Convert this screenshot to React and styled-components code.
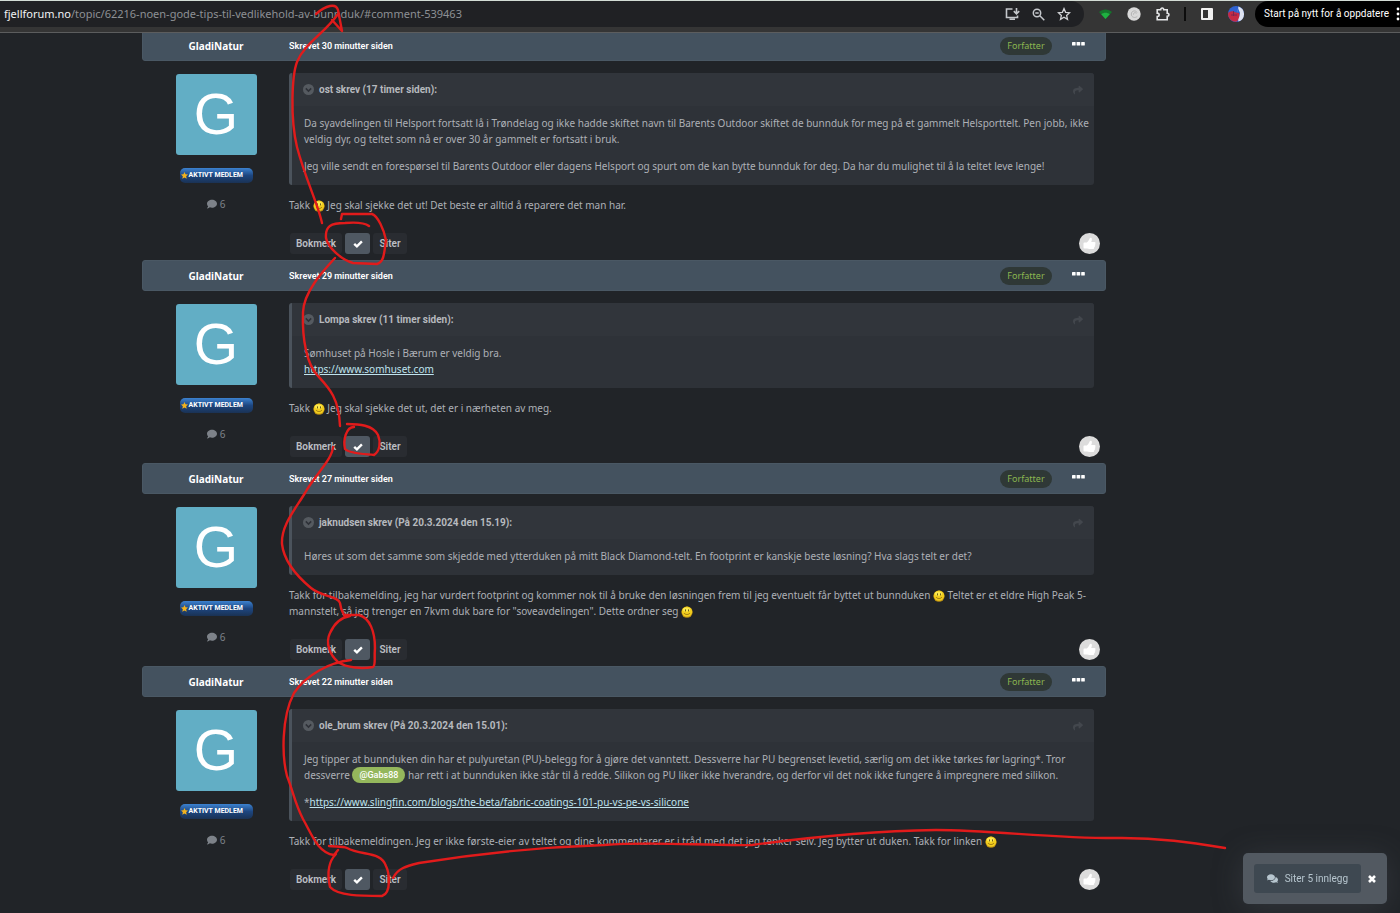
import React, { useState } from "react";
import styled, { createGlobalStyle, css } from "styled-components";
import { FaComment, FaComments, FaShare } from "react-icons/fa";

const textFont = `"Noto Sans", "Open Sans", sans-serif`;
const labelFont = `Roboto, "Noto Sans", sans-serif`;

const GlobalStyle = createGlobalStyle`
  *, *::before, *::after { box-sizing: border-box; }
  body {
    margin: 0;
    background: #212428;
    color: #adb0b6;
    font-family: ${textFont};
    font-size: 10px;
    line-height: 16px;
    overflow: hidden;
  }
  button { font: inherit; color: inherit; border: 0; padding: 0; background: none; cursor: pointer; }
  svg { display: block; }
`;

const Page = styled.div`
  position: relative;
  min-height: 100vh;
`;

/* Browser bar */

const BrowserBar = styled.header`
  position: relative;
  z-index: 1;
  display: flex;
  align-items: flex-start;
  height: 33px;
  margin-bottom: -3px;
  background: #353535;
  border-top: 1px solid #d3dcd5;
  border-bottom: 1px solid #5c5d5e;
`;

const AddressBar = styled.div`
  flex: 1;
  display: flex;
  align-items: center;
  height: 26px;
  padding: 0 12px 0 4px;
  background: #202124;
  border-radius: 0 13px 13px 0;
`;

const Address = styled.div`
  flex: 1;
  font-size: 11px;
  white-space: nowrap;
  color: #8d9094;
`;

const Host = styled.span`
  color: #f1f3f4;
`;

const IconRow = styled.div`
  display: flex;
  align-items: center;
  gap: ${(p) => p.$gap}px;
`;

const IconButton = styled.button`
  display: flex;
  align-items: center;
  justify-content: center;
  width: 16px;
  height: 16px;
`;

const Extensions = styled(IconRow)`
  height: 26px;
  padding: 0 11px 0 13px;
`;

const Divider = styled.span`
  width: 2px;
  height: 14px;
  background: #0c0c0c;
`;

const UpdateButton = styled.button`
  display: flex;
  align-items: center;
  justify-content: space-between;
  width: 145px;
  height: 26px;
  padding-left: 9px;
  background: #000;
  color: #fff;
  border-radius: 13px 0 0 13px;
  font-family: ${labelFont};
  white-space: nowrap;
`;

/* Thread */

const Thread = styled.main`
  margin: 0 294px 0 142px;
`;

const PostHeader = styled.header`
  display: flex;
  align-items: center;
  height: 31px;
  background: #44525f;
  border: 1px solid #4a5864;
  border-radius: 3px;
  color: #fff;
`;

const Author = styled.h3`
  width: 146px;
  margin: 0;
  font-size: 10px;
  font-weight: 700;
  line-height: 16px;
  text-align: center;
`;

const Posted = styled.time`
  flex: 1;
  font-family: ${labelFont};
  font-size: 9px;
  font-weight: 600;
`;

const RoleBadge = styled.span`
  width: 52px;
  height: 18px;
  border-radius: 9px;
  background: #2f3836;
  color: #8cb650;
  font-size: 9px;
  line-height: 18px;
  text-align: center;
`;

const MenuButton = styled.button`
  display: flex;
  width: 13px;
  height: 8px;
  margin: 0 20px;
`;

const PostBody = styled.div`
  display: grid;
  grid-template-columns: 147px minmax(0, 1fr);
  padding: 12px 12px 6px 0;
`;

const Profile = styled.aside`
  display: flex;
  flex-direction: column;
  align-items: center;
  gap: 13px;
  padding: 1px 0 0 1px;
`;

const Avatar = styled.div`
  width: 81px;
  height: 81px;
  border-radius: 3px;
  background: #62aec5;
  color: #fff;
  font-family: "Liberation Sans", Arial, sans-serif;
  font-size: 57px;
  line-height: 81px;
  text-align: center;
`;

const MemberBadge = styled.div`
  display: flex;
  align-items: center;
  gap: 1px;
  width: 73px;
  height: 15px;
  padding-left: 1px;
  border-radius: 5px;
  background: linear-gradient(#3c82d0, #1d4680 50%, #1a3254);
  color: #fff;
  font-family: ${labelFont};
  font-size: 7px;
  font-weight: 700;
  line-height: 15px;
  white-space: nowrap;
`;

const PostCount = styled.div`
  display: flex;
  align-items: center;
  gap: 3px;
  color: #7d8289;
`;

const Quote = styled.blockquote`
  margin: 0 0 12px;
  border-left: 3px solid #4b535c;
  border-radius: 3px;
  background: #2e3238;
`;

const QuoteHeader = styled.div`
  display: flex;
  align-items: center;
  gap: 5px;
  height: 33px;
  padding: 0 11px;
  border-radius: 0 3px 0 0;
  background: #31353b;
  color: #b6b9be;
`;

const Cite = styled.cite`
  flex: 1;
  font-family: ${labelFont};
  font-style: normal;
  font-weight: 700;
`;

const QuoteBody = styled.div`
  display: grid;
  gap: 11px;
  padding: 9px 2px 11px 12px;
`;

const Paragraph = styled.p`
  margin: 0;
`;

const TextLink = styled.a`
  color: #bfe3ee;
  text-decoration: underline;
`;

const Mention = styled.a`
  display: inline-block;
  height: 16px;
  padding: 0 7px;
  border-radius: 8px;
  background: #94b75c;
  color: #fff;
  font-family: ${labelFont};
  font-size: 9px;
  font-weight: 500;
  text-decoration: none;
  vertical-align: top;
`;

const SmileyBox = styled.span`
  display: inline-block;
  width: 12px;
  height: 12px;
  margin-top: 3px;
  vertical-align: top;
`;

const Actions = styled.footer`
  display: flex;
  align-items: center;
  gap: 3px;
  height: 21px;
  margin-top: 20px;
  padding-left: 1px;
`;

const ActionButton = styled.button`
  display: flex;
  align-items: center;
  justify-content: center;
  width: ${(p) => p.$width}px;
  height: 21px;
  border-radius: 3px;
  background: #292c31;
  color: #bcbfc4;
  font-family: ${labelFont};
  font-weight: 600;
  ${(p) =>
    p.$active &&
    css`
      background: #4f5862;
      color: #fff;
    `}
`;

const LikeButton = styled.button`
  display: flex;
  align-items: center;
  justify-content: center;
  width: 21px;
  height: 21px;
  margin: 0 -6px 0 auto;
  border-radius: 50%;
  background: #dcdcdc;
`;

/* Multi-quote popup */

const QuotePopup = styled.div`
  position: fixed;
  right: 13px;
  bottom: 9px;
  display: flex;
  align-items: center;
  gap: 7px;
  height: 51px;
  padding: 0 8px 0 11px;
  border-radius: 5px;
  background: #525961;
  box-shadow: 0 4px 30px rgba(82, 89, 97, 0.35);
`;

const QuoteAllButton = styled.button`
  display: flex;
  align-items: center;
  gap: 7px;
  height: 29px;
  padding: 0 13px;
  border-radius: 3px;
  background: #3e4851;
  color: #b7c6cf;
  font-family: ${labelFont};
`;

const CloseButton = styled.button`
  width: 11px;
  height: 16px;
  color: #fff;
`;

const Markup = styled.svg`
  position: absolute;
  top: 0;
  left: 0;
  z-index: 2;
  width: 1400px;
  height: 913px;
  pointer-events: none;
`;

const Smiley = () => (
  <SmileyBox role="img" aria-label=":)">
    <svg width="12" height="12" viewBox="0 0 12 12">
      <circle cx="6" cy="6.2" r="5.6" fill="#b98c12" />
      <circle cx="6" cy="5.6" r="5.2" fill="#f0cc1e" />
      <ellipse cx="5.5" cy="3.6" rx="3.6" ry="2.2" fill="#fbe94f" />
      <path d="M4.5 3.4v2M7.5 3.400v2" stroke="#4a3708" strokeWidth="0.800" />
      <path d="M3 7c1.200 2 4.800 2 6 0" stroke="#8a660c" strokeWidth="0.800" fill="none" />
    </svg>
  </SmileyBox>
);

const ChevronDisc = () => (
  <svg width="11" height="11" viewBox="0 0 11 11">
    <circle cx="5.500" cy="5.500" r="5.500" fill="#555a60" />
    <path d="M2.800 4.400l2.700 2.700 2.700-2.700" stroke="#2e3138" strokeWidth="1.500" fill="none" />
  </svg>
);

const Check = () => (
  <svg width="10" height="8" viewBox="0 0 10 8" fill="none" stroke="currentColor" strokeWidth="2.400">
    <path d="M1.200 3.800l2.700 2.500L8.900 1.300" />
  </svg>
);

const Thumb = () => (
  <svg width="13" height="13" viewBox="0 0 13 13" fill="#fff">
    <path d="M.5 6.200c0-.4.3-.7.700-.7h2.600C5 4.600 6 3.200 6.500 1.800 6.800.4 8.800.5 8.900 2.200c0 1-.3 1.800-.7 2.700h3.100c1.400 0 1.700 1.500.8 2.100.5.600.3 1.500-.3 1.800.3.700 0 1.400-.6 1.600.1 1-.5 1.600-1.500 1.600H6.500c-1 0-1.700-.5-2.500-.6H1.200c-.4 0-.7-.3-.7-.7z" />
  </svg>
);

const Dots = () => (
  <svg width="13" height="4" viewBox="0 0 13 4" fill="#fff">
    <rect width="3.600" height="3.600" rx="0.600" />
    <rect x="4.600" width="3.600" height="3.600" rx="0.600" />
    <rect x="9.200" width="3.600" height="3.600" rx="0.600" />
  </svg>
);

const Star = () => (
  <svg width="7" height="7" viewBox="0 0 14 14">
    <path d="M7 0l2.100 4.700 4.900.5-3.700 3.400 1.100 5L7 11.100l-4.400 2.500 1.100-5L0 5.200l4.900-.5z" fill="#f2b21c" />
  </svg>
);

const posts = [
  {
    minutes: 30,
    cite: "ost skrev (17 timer siden):",
    quote: [
      "Da syavdelingen til Helsport fortsatt lå i Trøndelag og ikke hadde skiftet navn til Barents Outdoor skiftet de bunnduk for meg på et gammelt Helsporttelt. Pen jobb, ikke veldig dyr, og teltet som nå er over 30 år gammelt er fortsatt i bruk.",
      "Jeg ville sendt en forespørsel til Barents Outdoor eller dagens Helsport og spurt om de kan bytte bunnduk for deg. Da har du mulighet til å la teltet leve lenge!",
    ],
    reply: <>Takk <Smiley /> Jeg skal sjekke det ut! Det beste er alltid å reparere det man har.</>,
  },
  {
    minutes: 29,
    cite: "Lompa skrev (11 timer siden):",
    quote: [
      <>Sømhuset på Hosle i Bærum er veldig bra.<br /><TextLink href="#somhuset">https://www.somhuset.com</TextLink></>,
    ],
    reply: <>Takk <Smiley /> Jeg skal sjekke det ut, det er i nærheten av meg.</>,
  },
  {
    minutes: 27,
    cite: "jaknudsen skrev (På 20.3.2024 den 15.19):",
    quote: [
      "Høres ut som det samme som skjedde med ytterduken på mitt Black Diamond-telt. En footprint er kanskje beste løsning? Hva slags telt er det?",
    ],
    reply: <>Takk for tilbakemelding, jeg har vurdert footprint og kommer nok til å bruke den løsningen frem til jeg eventuelt får byttet ut bunnduken <Smiley /> Teltet er et eldre High Peak 5-mannstelt, så jeg trenger en 7kvm duk bare for "soveavdelingen". Dette ordner seg <Smiley /></>,
  },
  {
    minutes: 22,
    cite: "ole_brum skrev (På 20.3.2024 den 15.01):",
    quote: [
      <>Jeg tipper at bunnduken din har et pulyuretan (PU)-belegg for å gjøre det vanntett. Dessverre har PU begrenset levetid, særlig om det ikke tørkes før lagring*. Tror dessverre <Mention href="#gabs88">@Gabs88</Mention> har rett i at bunnduken ikke står til å redde. Silikon og PU liker ikke hverandre, og derfor vil det nok ikke fungere å impregnere med silikon.</>,
      <>*<TextLink href="#slingfin">https://www.slingfin.com/blogs/the-beta/fabric-coatings-101-pu-vs-pe-vs-silicone</TextLink></>,
    ],
    reply: <>Takk for tilbakemeldingen. Jeg er ikke første-eier av teltet og dine kommentarer er i tråd med det jeg tenker selv. Jeg bytter ut duken. Takk for linken <Smiley /></>,
  },
];

function Post({ minutes, cite, quote, reply }) {
  const [selected, setSelected] = useState(true);
  return (
    <article>
      <PostHeader>
        <Author>GladiNatur</Author>
        <Posted>Skrevet {minutes} minutter siden</Posted>
        <RoleBadge>Forfatter</RoleBadge>
        <MenuButton aria-label="Flere valg"><Dots /></MenuButton>
      </PostHeader>
      <PostBody>
        <Profile>
          <Avatar>G</Avatar>
          <MemberBadge><Star />AKTIVT MEDLEM</MemberBadge>
          <PostCount><FaComment size={10} />6</PostCount>
        </Profile>
        <div>
          <Quote>
            <QuoteHeader>
              <ChevronDisc />
              <Cite>{cite}</Cite>
              <FaShare size={10} color="#43474d" />
            </QuoteHeader>
            <QuoteBody>
              {quote.map((text, i) => <Paragraph key={i}>{text}</Paragraph>)}
            </QuoteBody>
          </Quote>
          <Paragraph>{reply}</Paragraph>
          <Actions>
            <ActionButton $width={52}>Bokmerk</ActionButton>
            <ActionButton $width={25} $active={selected} aria-label="Velg sitat" aria-pressed={selected} onClick={() => setSelected(!selected)}>
              <Check />
            </ActionButton>
            <ActionButton $width={34}>Siter</ActionButton>
            <LikeButton aria-label="Lik"><Thumb /></LikeButton>
          </Actions>
        </div>
      </PostBody>
    </article>
  );
}

const strokes = [
  "M322 223C318 204 305 178 297 147C290 118 292 75 297 62C304 44 325 33 338 14",
  "M316 14C326 5 336 3 338 10L342 31L332 20",
  "M341 219L342 214L372 214C378 216 384 230 386 240C384 254 384 262 377 264L353 263C342 260 328 248 326 238C325 226 331 223 345 223C357 222 365 223 369 226",
  "M335 258C322 272 304 292 303 312C302 340 307 365 318 376C329 388 339 398 340 426",
  "M354 427C346 427 343 440 345 449C350 454 366 454 374 455C380 451 381 442 378 435C373 425 359 424 347 424",
  "M333 447C332 460 315 475 305 493C294 511 281 526 282 544C284 562 299 578 311 588C322 597 338 596 340 603C341 611 343 612 344 615",
  "M344 615L359 615C370 618 375 632 375 648C374 659 376 665 373 667C362 669 347 668 338 662C330 655 325 643 330 633C335 622 343 617 350 616",
  "M351 660C330 662 306 675 294 693C281 718 282 757 287 776C293 791 295 804 303 819C312 835 318 853 334 855L338 850",
  "M336 854C326 864 328 878 330 887C338 896 361 896 382 896C392 893 389 872 386 866C381 851 362 856 347 848C342 846 335 847 329 846",
  "M393 878C398 868 407 866 419 863C475 854 542 847 604 845C654 841 704 846 752 845C826 835 878 831 936 830C992 830 1058 839 1122 838C1160 838 1188 842 1225 848",
];

export default function App() {
  return (
    <Page>
      <GlobalStyle />
      <BrowserBar>
        <AddressBar>
          <Address><Host>fjellforum.no</Host>/topic/62216-noen-gode-tips-til-vedlikehold-av-bunnduk/#comment-539463</Address>
          <IconRow $gap={10}>
            <IconButton aria-label="Installer">
              <svg width="15" height="14" viewBox="0 0 15 14" fill="none" stroke="#c4c7cb" strokeWidth="1.600">
                <path d="M7.500 2H1.500v8.500h11V8.500M4.500 12.300h5.500M11.500 1v5M8.800 4.200l2.700 2.600 2.700-2.600" />
              </svg>
            </IconButton>
            <IconButton aria-label="Zoom">
              <svg width="13" height="13" viewBox="0 0 13 13" fill="none" stroke="#c4c7cb" strokeWidth="1.500">
                <circle cx="5" cy="5" r="3.700" />
                <path d="M7.800 7.800l4.500 4.500M3.300 5h3.400" />
              </svg>
            </IconButton>
            <IconButton aria-label="Bokmerk siden">
              <svg width="14" height="14" viewBox="0 0 14 14" fill="none" stroke="#d0d2d5" strokeWidth="1.300">
                <path d="M7 1.600l1.600 3.700 4 .4-3 2.700.9 4L7 10.300l-3.500 2.100.9-4-3-2.700 4-.4z" />
              </svg>
            </IconButton>
          </IconRow>
        </AddressBar>
        <Extensions $gap={13}>
          <IconButton aria-label="Nettverk">
            <svg width="13" height="10" viewBox="0 0 13 10">
              <path d="M0 3C4-.5 9-.5 13 3L6.500 10z" fill="#15752c" />
              <path d="M2.200 5.200c2.600-2 6-2 8.600 0L6.500 10z" fill="#1fb141" />
            </svg>
          </IconButton>
          <IconButton aria-label="Utvidelse">
            <svg width="14" height="14" viewBox="0 0 14 14">
              <circle cx="7" cy="7" r="6.700" fill="#d9d9d9" />
              <path d="M10 5.500C9 3 4.500 3.400 4.300 7c-.1 3.500 4 4.500 6 2.300M9.500 6.300C8 5 6 6 6.500 7.600" fill="none" stroke="#b3b3b3" />
            </svg>
          </IconButton>
          <IconButton aria-label="Utvidelser">
            <svg width="14" height="14" viewBox="0 0 14 14" fill="none" stroke="#e4e5e7" strokeWidth="1.600">
              <path d="M1.200 2.800h3.500c0-2.400 3-2.400 3 0h3.500v3.500c2.400 0 2.400 3 0 3v3.500h-10V9.500c2.600 0 2.600-3.400 0-3.400z" />
            </svg>
          </IconButton>
          <Divider />
          <IconButton aria-label="Sidepanel">
            <svg width="12" height="12" viewBox="0 0 12 12" fill="#f1f1f1">
              <path fillRule="evenodd" d="M1 0h10a1 1 0 011 1v10a1 1 0 01-1 1H1a1 1 0 01-1-1V1a1 1 0 011-1zM2 2v8h5V2z" />
            </svg>
          </IconButton>
          <IconButton aria-label="Profil">
            <svg width="16" height="16" viewBox="0 0 16 16">
              <circle cx="8" cy="8" r="8" fill="#2f62d0" />
              <path d="M10.500 .4a8 8 0 010 15.200L9 8z" fill="#dfe3f0" />
              <path d="M10 2l2 5-1 4-2-4z" fill="#2f62d0" />
              <path d="M0 8c0-2 3-3 5-2.500l3 1 3 .5c1 2 0 6-2 8.500C4 16.500 0 12 0 8z" fill="#c62a45" />
              <path d="M5.500 5v5M3 9h6" stroke="#7d2550" />
            </svg>
          </IconButton>
        </Extensions>
        <UpdateButton>
          Start på nytt for å oppdatere
          <svg width="4" height="14" viewBox="0 0 4 14" fill="#fff">
            <circle cx="2" cy="2" r="1.400" /><circle cx="2" cy="7" r="1.400" /><circle cx="2" cy="12" r="1.400" />
          </svg>
        </UpdateButton>
      </BrowserBar>
      <Thread>
        {posts.map((post) => <Post key={post.minutes} {...post} />)}
      </Thread>
      <QuotePopup>
        <QuoteAllButton><FaComments size={11} />Siter 5 innlegg</QuoteAllButton>
        <CloseButton aria-label="Lukk">
          <svg width="8" height="8" viewBox="0 0 8 8" stroke="#fff" strokeWidth="2.600"><path d="M1 1l6 6M7 1L1 7" /></svg>
        </CloseButton>
      </QuotePopup>
      <Markup viewBox="0 0 1400 913" fill="none" stroke="#e11b1b" strokeWidth="2.400" strokeLinecap="round" strokeLinejoin="round" aria-hidden="true">
        {strokes.map((d) => <path key={d} d={d} />)}
      </Markup>
    </Page>
  );
}
